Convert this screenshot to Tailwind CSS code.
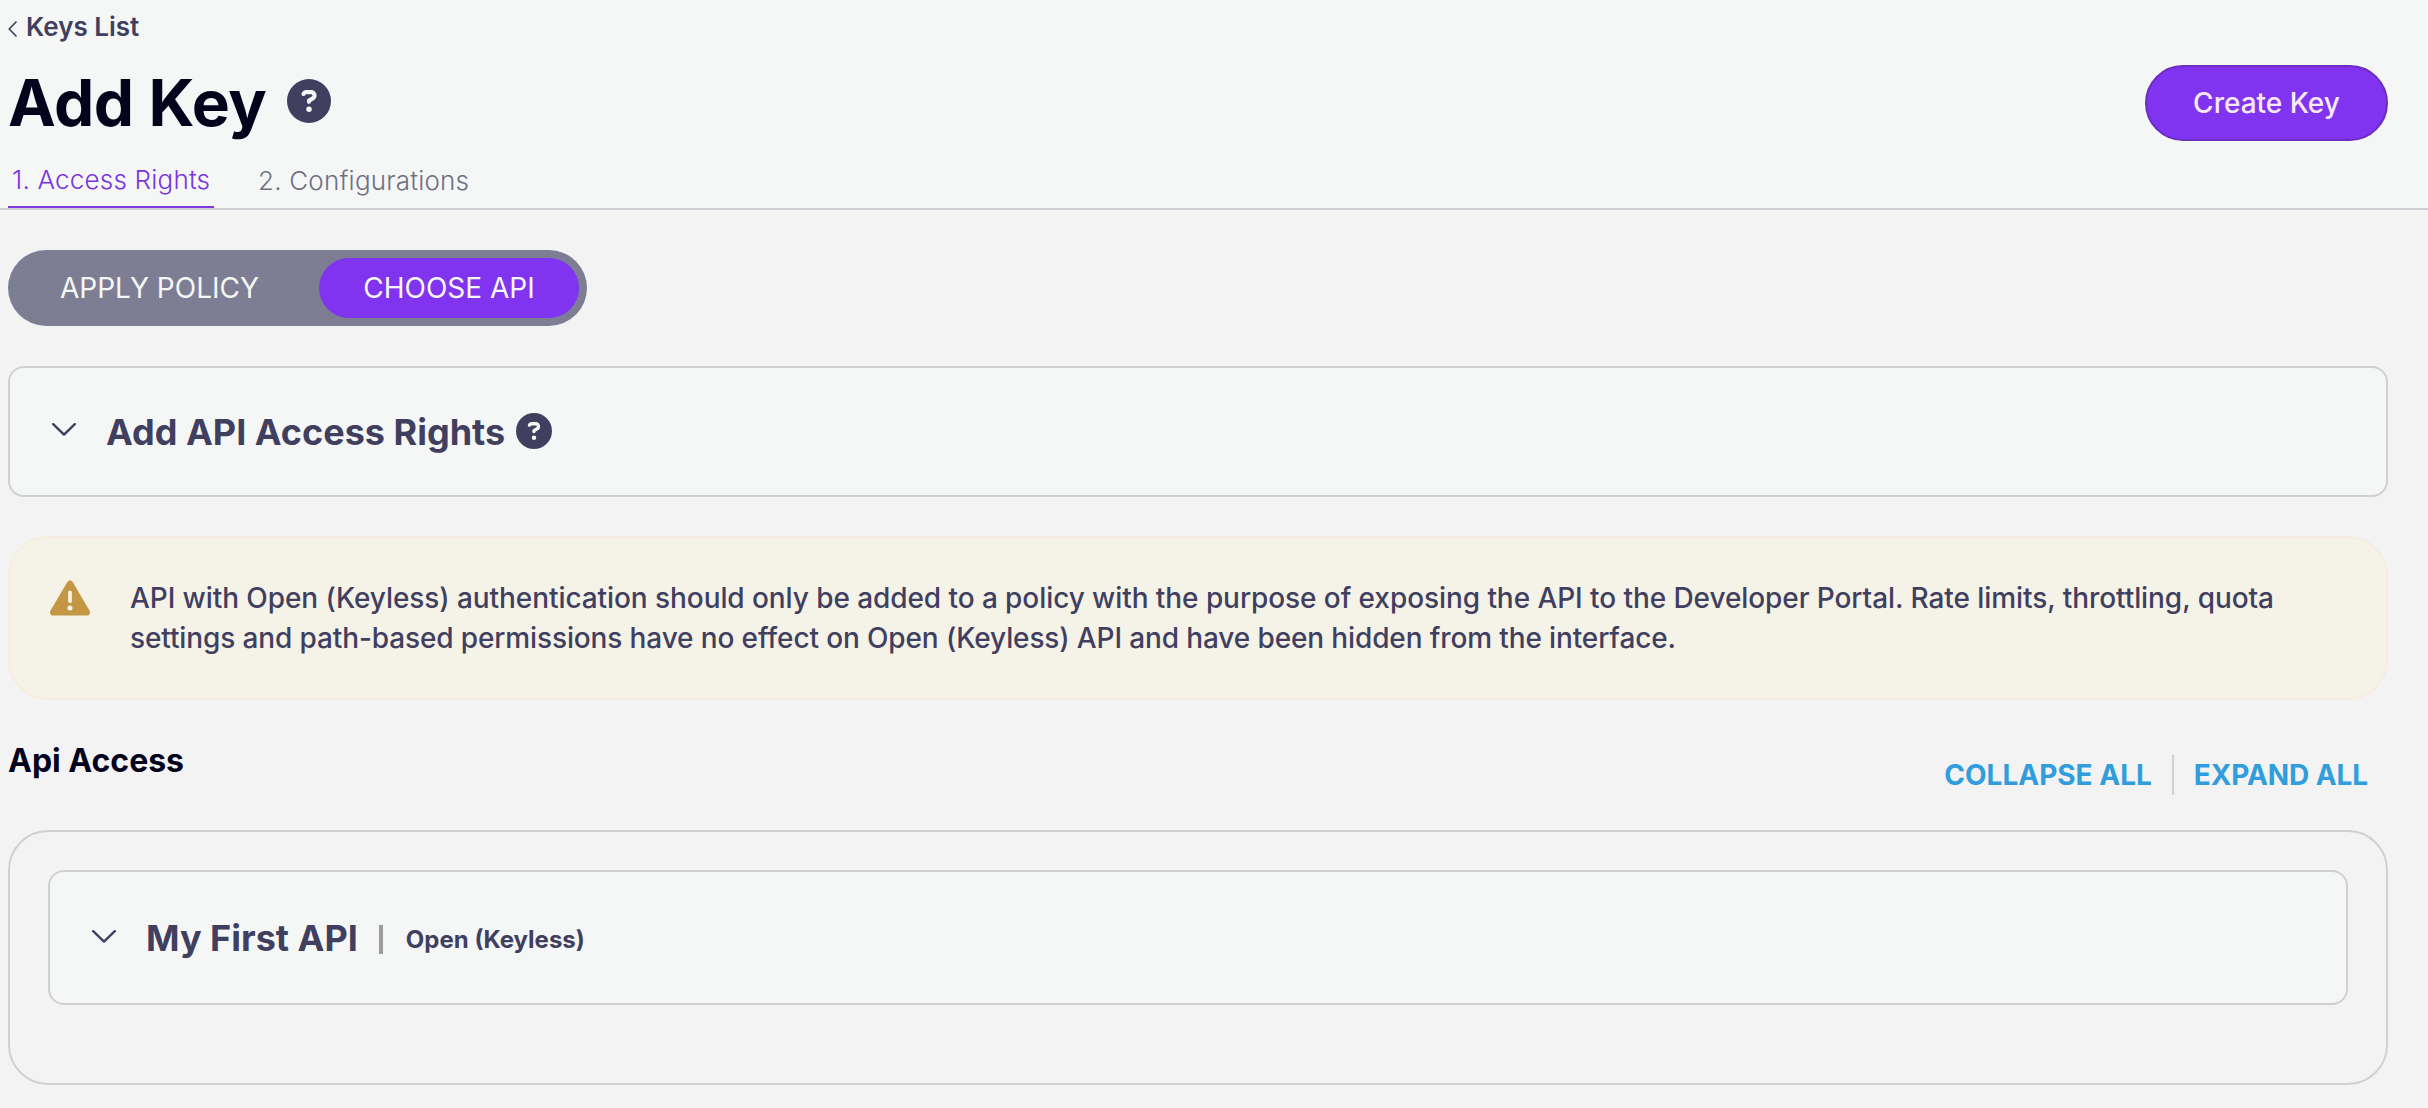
<!DOCTYPE html>
<html lang="en">
<head>
<meta charset="utf-8">
<title>Add Key</title>
<script src="https://cdn.jsdelivr.net/npm/@tailwindcss/browser@4"></script>
</head>
<body class="min-h-screen overflow-hidden bg-[#f3f3f3] font-['Inter',sans-serif] text-[#413f60] antialiased">
  <header class="h-[210px] border-b-2 border-[#d0d0d7] bg-[#f5f7f6] pl-2 pr-10">
    <a class="flex h-[54px] items-center text-[26px] font-semibold leading-8">
      <svg class="mr-[9px] mt-1 h-4 w-[9px]" viewBox="0 0 9 16" fill="none" stroke="currentColor" stroke-width="1.7" stroke-linecap="round" stroke-linejoin="round"><path d="M8 1 1.2 8 8 15"/></svg>
      <span>Keys List</span>
    </a>
    <div class="flex h-[98px] items-center">
      <h1 class="w-[257px] whitespace-nowrap text-[64px] font-bold leading-[78px] tracking-[-0.4px] text-[#03031c]">Add Key</h1>
      <svg class="-mt-[5px] ml-[22px] size-11" viewBox="0 0 512 512" fill="currentColor"><path fill-rule="evenodd" d="M256 512A256 256 0 1 0 256 0a256 256 0 1 0 0 512zM169.8 165.3c7.9-22.3 29.1-37.3 52.8-37.3h58.300c34.900 0 63.100 28.300 63.100 63.100c0 22.600-12.100 43.500-31.700 54.800L280 264.400c-.2 13-10.900 23.600-24 23.600c-13.300 0-24-10.700-24-24v-13.500c0-8.600 4.600-16.500 12.100-20.800l44.300-25.400c4.700-2.700 7.600-7.700 7.600-13.100c0-8.400-6.800-15.100-15.100-15.100h-58.300c-3.400 0-6.400 2.100-7.500 5.300l-.4 1.200c-4.400 12.500-18.200 19-30.600 14.600s-19-18.200-14.600-30.600l.4-1.200zM224 352a32 32 0 1 1 64 0 32 32 0 1 1-64 0z"/></svg>
      <button class="ml-auto h-[76px] w-[243px] rounded-full border-2 border-[#6a2fbe] bg-[#8034f0] text-[28px] font-[450] text-[#f8e9fa]">Create Key</button>
    </div>
    <nav class="flex h-14 gap-11 text-[26px] font-[350] tracking-[0.2px]">
      <a class="flex h-14 w-[206px] items-center border-b-2 border-[#7f3add] pl-1 text-[#7a33e0]">1. Access Rights</a>
      <a class="flex items-center text-[#6f6f82]">2. Configurations</a>
    </nav>
  </header>

  <main class="pl-2 pr-10 pt-10">
    <div class="flex h-[76px] w-[579px] items-center rounded-full bg-[#7d7d93] p-2 text-[28px] text-[#f5f7f6]">
      <span class="w-[303px] pl-11">APPLY POLICY</span>
      <span class="flex h-[60px] w-[260px] items-center justify-center rounded-full bg-[#8034f0]">CHOOSE API</span>
    </div>

    <section class="mt-10 flex h-[131px] items-center rounded-2xl border-2 border-[#d0d0d4] bg-[#f5f7f6] px-[42px]">
      <svg class="-mt-1 h-[13px] w-6" viewBox="0 0 24 13" fill="none" stroke="currentColor" stroke-width="2.4" stroke-linecap="round" stroke-linejoin="round"><path d="M1.200 1.200 12 11.600 22.800 1.200"/></svg>
      <h2 class="ml-[30px] text-[36px] font-bold">Add API Access Rights</h2>
      <svg class="-mt-px ml-[11px] size-9" viewBox="0 0 512 512" fill="currentColor"><path fill-rule="evenodd" d="M256 512A256 256 0 1 0 256 0a256 256 0 1 0 0 512zM169.8 165.3c7.9-22.3 29.1-37.3 52.8-37.3h58.300c34.900 0 63.100 28.300 63.100 63.100c0 22.600-12.100 43.500-31.700 54.800L280 264.400c-.2 13-10.900 23.600-24 23.600c-13.300 0-24-10.700-24-24v-13.500c0-8.600 4.600-16.500 12.100-20.800l44.300-25.400c4.700-2.700 7.600-7.700 7.600-13.100c0-8.400-6.800-15.100-15.100-15.100h-58.300c-3.400 0-6.400 2.100-7.500 5.300l-.4 1.200c-4.400 12.500-18.200 19-30.600 14.600s-19-18.200-14.600-30.600l.4-1.200zM224 352a32 32 0 1 1 64 0 32 32 0 1 1-64 0z"/></svg>
    </section>

    <section class="mt-[39px] flex h-[164px] rounded-[40px] border-2 border-[#f5eddf] bg-[#f5f3e7] pl-10 pt-10">
      <svg class="mt-0.5 h-9 w-10 shrink-0 text-[#c49745]" viewBox="0 32 512 448" fill="currentColor"><path fill-rule="evenodd" d="M256 32c14.200 0 27.300 7.500 34.500 19.800l216 368c7.300 12.400 7.300 27.700 .2 40.100S486.300 480 472 480H40c-14.300 0-27.600-7.700-34.700-20.100s-7-27.800 .2-40.100l216-368C228.700 39.500 241.800 32 256 32zm0 128c-13.300 0-24 10.700-24 24V296c0 13.300 10.700 24 24 24s24-10.700 24-24V184c0-13.300-10.700-24-24-24zm32 224a32 32 0 1 0-64 0 32 32 0 1 0 64 0z"/></svg>
      <p class="ml-10 text-[28px] font-medium leading-10 tracking-[-0.075px]">API with Open (Keyless) authentication should only be added to a policy with the purpose of exposing the API to the Developer Portal. Rate limits, throttling, quota<br><span class="tracking-[-0.125px]">settings and path-based permissions have no effect on Open (Keyless) API and have been hidden from the interface.</span></p>
    </section>

    <div class="flex h-[130px] items-center justify-between">
      <h3 class="-mt-[9px] text-[32px] font-bold text-[#03031c]">Api Access</h3>
      <div class="mr-5 mt-5 flex h-10 items-center text-[28px] font-bold text-[#319ddd]">
        <span>COLLAPSE ALL</span>
        <span class="ml-5 mr-5 h-10 w-0.5 bg-[#d0d0d4]"></span>
        <span class="tracking-[-0.1px]">EXPAND ALL</span>
      </div>
    </div>

    <section class="h-[255px] rounded-[40px] border-2 border-[#d0d0d4] p-[38px]">
      <div class="flex h-[135px] items-center rounded-2xl border-2 border-[#d0d0d4] bg-[#f5f7f6] px-[42px]">
        <svg class="-mt-[3px] h-[13px] w-6" viewBox="0 0 24 13" fill="none" stroke="currentColor" stroke-width="2.4" stroke-linecap="round" stroke-linejoin="round"><path d="M1.200 1.200 12 11.600 22.800 1.200"/></svg>
        <h2 class="ml-[30px] text-[36px] font-bold">My First API</h2>
        <span class="ml-[21px] mt-[3px] h-[29px] w-1 bg-[#9c9c9e]"></span>
        <span class="ml-[23px] mt-[4px] text-[24px] font-bold">Open (Keyless)</span>
      </div>
    </section>
  </main>
</body>
</html>
